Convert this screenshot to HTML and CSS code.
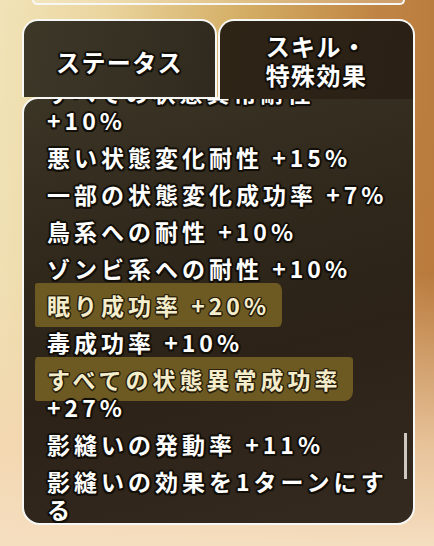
FILE: index.html
```html
<!DOCTYPE html>
<html lang="ja">
<head>
<meta charset="utf-8">
<title>スキル・特殊効果</title>
<link rel="stylesheet" href="styles.css">
</head>
<body>
<div class="screen">
  <div class="top-box"></div>
  <div class="window">
    <div class="tabs">
      <div class="tab tab-status"><span class="tab-label">ステータス</span></div>
      <div class="tab tab-skill is-active"><span class="tab-label">スキル・<br>特殊効果</span></div>
    </div>
    <div class="panel">
      <ul class="effects">
        <li class="effect">すべての状態異常耐性 +10%</li>
        <li class="effect">悪い状態変化耐性 +15%</li>
        <li class="effect">一部の状態変化成功率 +7%</li>
        <li class="effect">鳥系への耐性 +10%</li>
        <li class="effect">ゾンビ系への耐性 +10%</li>
        <li class="effect gold"><span class="band band-a">眠り成功率 +20%</span></li>
        <li class="effect">毒成功率 +10%</li>
        <li class="effect gold"><span class="band band-b">すべての状態異常成功率</span> +27%</li>
        <li class="effect">影縫いの発動率 +11%</li>
        <li class="effect">影縫いの効果を1ターンにする</li>
      </ul>
      <div class="scrollbar"></div>
    </div>
  </div>
</div>
</body>
</html>
```
FILE: styles.css
```css
html, body {
  margin: 0;
  padding: 0;
}

body {
  width: 434px;
  height: 546px;
  overflow: hidden;
  font-family: "Noto Sans CJK JP", "Noto Sans", sans-serif;
  background:
    linear-gradient(180deg, rgba(246, 222, 190, 0) 50%, rgba(244, 214, 178, 0.8) 82%, rgba(245, 222, 192, 1) 100%),
    linear-gradient(95deg, #f1e3b8 0%, #ead59e 22%, #d3ac62 52%, #c08544 78%, #b7773a 100%);
}

.screen {
  display: flex;
  flex-direction: column;
}

.top-box {
  margin-left: 32px;
  width: 373px;
  height: 5px;
  box-sizing: border-box;
  border: 2px solid #f7f7f5;
  border-top: none;
  border-radius: 0 0 12px 12px;
  background: rgba(255, 248, 230, 0.25);
}

.window {
  margin: 14px 0 0 22px;
  width: 393px;
  display: flex;
  flex-direction: column;
}

.tabs {
  display: flex;
  align-items: flex-end;
  gap: 1px;
}

.tab {
  box-sizing: border-box;
  border: 2px solid #f7f7f5;
  border-bottom: none;
  border-radius: 16px 16px 0 0;
  display: flex;
  align-items: center;
  justify-content: center;
  padding-top: 4px;
  color: #fff;
  font-weight: 700;
  font-size: 24px;
  line-height: 29px;
  letter-spacing: 1.4px;
  text-align: center;
  text-shadow:
    -2px 0 0 #120e08, 2px 0 0 #120e08, 0 -2px 0 #120e08, 0 2px 0 #120e08,
    -1.5px -1.5px 0 #120e08, 1.5px -1.5px 0 #120e08, -1.5px 1.5px 0 #120e08, 1.5px 1.5px 0 #120e08,
    0 0 3px #000;
}

.tab-status {
  width: 195px;
  height: 78px;
  background: linear-gradient(100deg, #3c3727 0%, #353022 60%, #2f2a1d 100%);
}

.tab-skill {
  flex: 1;
  height: 80px;
  margin-bottom: -2px;
  padding-top: 0;
  position: relative;
  z-index: 1;
  background: linear-gradient(100deg, #2e2416 0%, #2b2015 100%);
}

.panel {
  position: relative;
  box-sizing: border-box;
  height: 428px;
  border: 2px solid #f7f7f5;
  border-radius: 16px 0 18px 18px;
  overflow: hidden;
  background: linear-gradient(165deg, #3b3526 0%, #30281b 35%, #2c2218 60%, #352a1f 100%);
}

.effects {
  list-style: none;
  margin: -21px 0 0 0;
  padding: 0 22px 0 23px;
}

.effect {
  margin: 0 0 9px 0;
  color: #fff;
  font-weight: 700;
  font-size: 23px;
  line-height: 28px;
  letter-spacing: 4px;
  text-shadow:
    -2px 0 0 #120e08, 2px 0 0 #120e08, 0 -2px 0 #120e08, 0 2px 0 #120e08,
    -1.5px -1.5px 0 #120e08, 1.5px -1.5px 0 #120e08, -1.5px 1.5px 0 #120e08, 1.5px 1.5px 0 #120e08,
    0 0 3px #000;
}

.effect.gold {
  margin-top: 2px;
}

.band {
  display: inline-block;
  padding: 8px 12px;
  margin: -8px -12px;
  color: #f4edcb;
  background: #6d5a23;
  text-shadow:
    -1.5px 0 0 #2a200c, 1.5px 0 0 #2a200c, 0 -1.5px 0 #2a200c, 0 1.5px 0 #2a200c,
    -1px -1px 0 #2a200c, 1px -1px 0 #2a200c, -1px 1px 0 #2a200c, 1px 1px 0 #2a200c;
}

.band-a {
  border-radius: 3px 6px 4px 2px / 2px 8px 6px 3px;
}

.band-b {
  border-radius: 2px 4px 8px 3px / 6px 3px 10px 2px;
}

.scrollbar {
  position: absolute;
  right: 6px;
  top: 334px;
  width: 3px;
  height: 46px;
  background: #cdc8c2;
}
```
